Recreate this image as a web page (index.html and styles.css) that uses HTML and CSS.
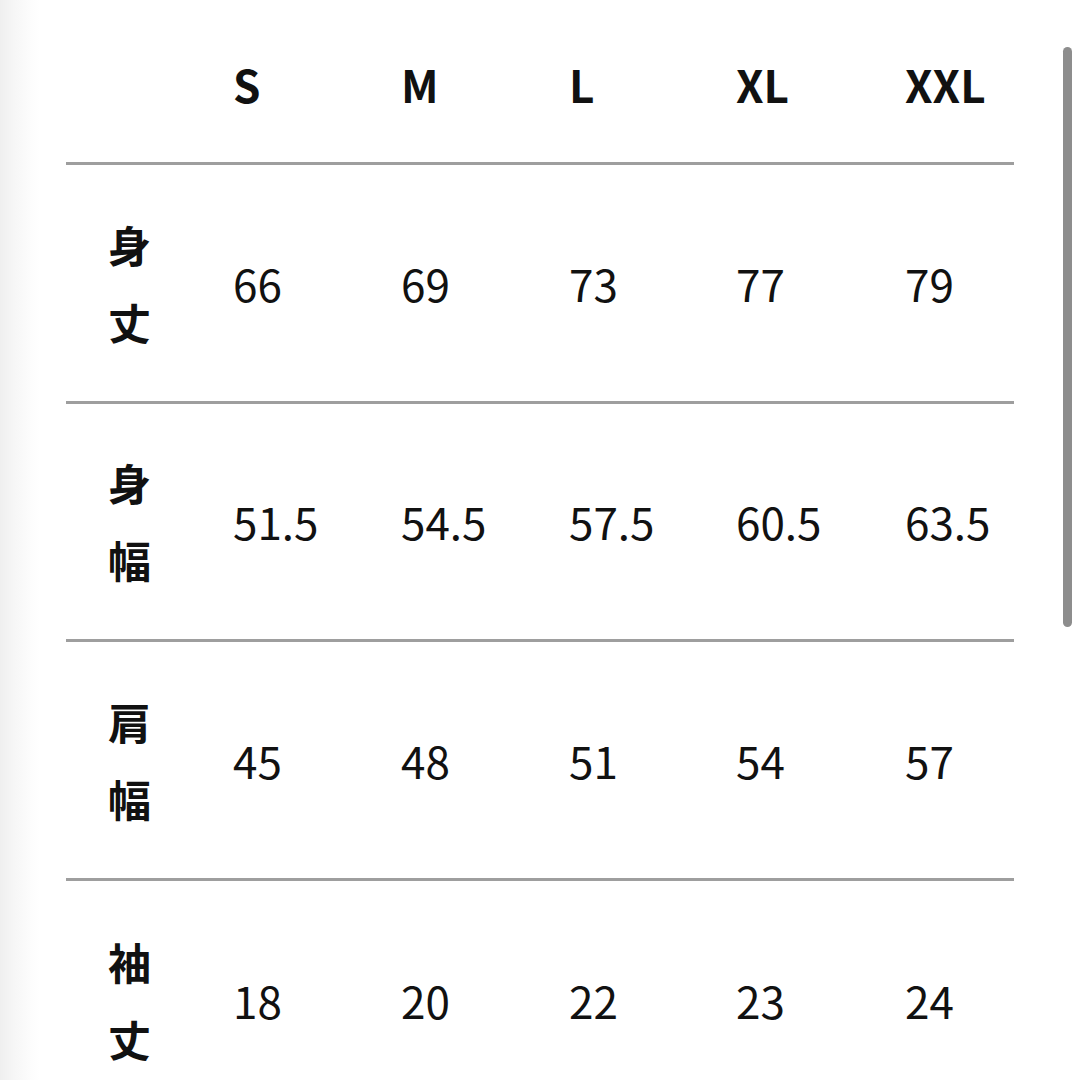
FILE: index.html
```html
<!DOCTYPE html>
<html lang="ja">
<head>
<meta charset="utf-8">
<link rel="stylesheet" href="styles.css">
</head>
<body>
<div class="page">
  <div class="table">
    <div class="row head">
      <div class="cell label"></div>
      <div class="cell">S</div>
      <div class="cell">M</div>
      <div class="cell">L</div>
      <div class="cell">XL</div>
      <div class="cell">XXL</div>
    </div>
    <div class="row">
      <div class="cell label"><span>身</span><span>丈</span></div>
      <div class="cell">66</div>
      <div class="cell">69</div>
      <div class="cell">73</div>
      <div class="cell">77</div>
      <div class="cell">79</div>
    </div>
    <div class="row">
      <div class="cell label"><span>身</span><span>幅</span></div>
      <div class="cell">51.5</div>
      <div class="cell">54.5</div>
      <div class="cell">57.5</div>
      <div class="cell">60.5</div>
      <div class="cell">63.5</div>
    </div>
    <div class="row">
      <div class="cell label"><span>肩</span><span>幅</span></div>
      <div class="cell">45</div>
      <div class="cell">48</div>
      <div class="cell">51</div>
      <div class="cell">54</div>
      <div class="cell">57</div>
    </div>
    <div class="row last">
      <div class="cell label"><span>袖</span><span>丈</span></div>
      <div class="cell">18</div>
      <div class="cell">20</div>
      <div class="cell">22</div>
      <div class="cell">23</div>
      <div class="cell">24</div>
    </div>
  </div>
  <div class="scrollbar"></div>
</div>
</body>
</html>
```

FILE: styles.css
```css
html, body {
  margin: 0;
  padding: 0;
  background: #ffffff;
}
body {
  font-family: "Noto Sans CJK JP", "Noto Sans", sans-serif;
  color: #111111;
  overflow: hidden;
}
.page {
  position: relative;
  width: 1080px;
  height: 1080px;
  overflow: hidden;
  background: linear-gradient(to right, #efefef 0px, #f6f6f6 14px, #fdfdfd 32px, #ffffff 40px);
}
.table {
  margin-left: 66px;
  width: 948px;
  display: flex;
  flex-direction: column;
}
.row {
  display: grid;
  grid-template-columns: 167px 168px 168px 167px 169px 109px;
  align-items: center;
  height: 238.5px;
  box-sizing: border-box;
  border-bottom: 3px solid #9e9e9e;
}
.row.head {
  height: 165px;
}
.row.last {
  border-bottom: none;
}
.cell {
  font-size: 44px;
  line-height: 60px;
  font-weight: 400;
  white-space: nowrap;
}
.head .cell {
  font-size: 44px;
  font-weight: 700;
  position: relative;
  top: 3px;
}
.label {
  display: flex;
  flex-direction: column;
  padding-left: 42px;
  font-weight: 700;
  font-size: 43px;
  line-height: 77px;
}
.scrollbar {
  position: absolute;
  left: 1063px;
  top: 47px;
  width: 9px;
  height: 580px;
  border-radius: 5px;
  background: #8d8d8d;
}
```
